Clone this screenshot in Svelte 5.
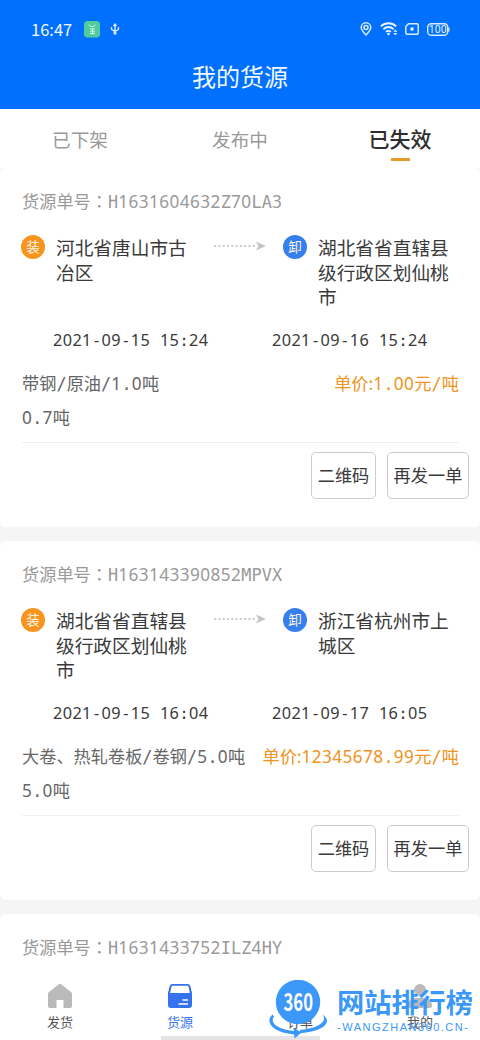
<script>
  const tabs = ['已下架', '发布中', '已失效'];
  let activeTab = '已失效';

  const orders = [
    {
      no: 'H1631604632Z70LA3',
      from: '河北省唐山市古冶区',
      to: '湖北省省直辖县级行政区划仙桃市',
      loadAt: '2021-09-15 15:24',
      unloadAt: '2021-09-16 15:24',
      goods: '带钢/原油/1.0吨',
      price: '1.00元/吨',
      rest: '0.7吨'
    },
    {
      no: 'H163143390852MPVX',
      from: '湖北省省直辖县级行政区划仙桃市',
      to: '浙江省杭州市上城区',
      loadAt: '2021-09-15 16:04',
      unloadAt: '2021-09-17 16:05',
      goods: '大卷、热轧卷板/卷钢/5.0吨',
      price: '12345678.99元/吨',
      rest: '5.0吨'
    },
    { no: 'H1631433752ILZ4HY' }
  ];

  const navItems = [
    { id: 'send', label: '发货' },
    { id: 'goods', label: '货源' },
    { id: 'order', label: '订单' },
    { id: 'mine', label: '我的' }
  ];
  let activeNav = 'goods';

  // digits and other ascii use different faces on the same fixed pitch
  function runs(text) {
    return text.match(/[0-9]+|[\x20-\x2f\x3a-\x7e]+|[^\x20-\x7e]+/g).map((t) => ({
      t,
      kind: /^[0-9]/.test(t) ? 'digits' : /^[\x20-\x7e]/.test(t) ? 'ascii' : 'han'
    }));
  }
</script>

{#snippet mono(text)}{#each runs(text) as r}<span class={r.kind}>{r.t}</span>{/each}{/snippet}

<div class="page">
  <header class="header">
    <div class="status">
      <span class="time">16:47</span>
      <svg class="app-badge" width="16" height="17" viewBox="0 0 16 17">
        <rect width="16" height="16.5" rx="3.5" fill="#4fcb9c" />
        <path d="M4.5 3.800l2 1.700h3l2-1.700M6.300 8h4.500M6.300 10.300h4.500M5.800 12.600h5.200M8.500 8v4.500" fill="none" stroke="#d9fff0" stroke-width="1" />
      </svg>
      <svg class="usb" width="10" height="12" viewBox="0 0 10 12" fill="none" stroke="#d5eaff" stroke-width="1.3">
        <path d="M5 11V1.5M3.5 3L5 1l1.5 2M1.5 4v2.3L5 8.500l3.500-2.200V4" />
        <circle cx="5" cy="10" r="1" fill="#d5eaff" />
      </svg>
      <div class="status-right">
        <svg width="12" height="14" viewBox="0 0 12 14" fill="none" stroke="#d8ecff" stroke-width="1.5">
          <path d="M6 13C3.4 10.2 1.2 8.1 1.2 5.6a4.800 4.800 0 019.600 0C10.800 8.100 8.600 10.200 6 13z" />
          <circle cx="6" cy="5.600" r="2" />
        </svg>
        <svg width="18" height="14" viewBox="0 0 18 14" fill="none" stroke="#e5f3ff" stroke-width="1.8">
          <path d="M.8 4.300c4.600-4.100 10.800-4.100 15.400 0M3.300 7.200c3.300-2.800 7.100-2.800 10.400 0M5.900 9.900c1.600-1.300 3.400-1.300 5 0" />
          <circle cx="8.500" cy="12" r="1.300" fill="#e5f3ff" stroke="none" />
          <path d="M13.300 9.800l2-2.300 2 2.300zM13.300 11l2 2.300 2-2.300z" fill="#e5f3ff" stroke="none" />
        </svg>
        <svg width="14" height="12" viewBox="0 0 14 12">
          <path d="M3.500.8H12a1.200 1.200 0 011.200 1.200v8a1.200 1.200 0 01-1.200 1.200H2A1.200 1.200 0 01.8 10V3.500z" fill="none" stroke="#d8ecff" stroke-width="1.500" />
          <rect x="5.500" y="4.500" width="3" height="3" fill="#fff" />
        </svg>
        <svg width="23" height="13" viewBox="0 0 23 13">
          <rect x=".7" y=".7" width="20" height="11.600" rx="3.500" fill="none" stroke="#d8ecff" stroke-width="1.400" />
          <path d="M21.800 4.500v4" stroke="#d8ecff" stroke-width="1.400" />
          <text x="10.700" y="10.200" text-anchor="middle" font-size="10.500" fill="#e5f3ff">100</text>
        </svg>
      </div>
    </div>
    <h1>我的货源</h1>
  </header>

  <div class="tabs">
    {#each tabs as tab}
      <button class="tab" class:active={tab === activeTab} on:click={() => (activeTab = tab)}>{tab}</button>
    {/each}
  </div>

  <main class="list">
    {#each orders as order}
      <section class="card">
        <div class="order-no">货源单号<span class="colon" lang="zh-TW">：</span>{@render mono(order.no)}</div>
        {#if order.from}
          <div class="route">
            <span class="dot load">装</span>
            <div class="place">{order.from}</div>
            <svg class="arrow" width="52" height="12" viewBox="0 0 52 12">
              <path d="M0 6h42" stroke="#cdcdcd" stroke-width="2" stroke-dasharray="2.200 2.100" />
              <path d="M42 1.500L52 6l-10 4.500L44.500 6z" fill="#c4c4c4" />
            </svg>
            <span class="dot unload">卸</span>
            <div class="place">{order.to}</div>
          </div>
          <div class="dates">
            <span>{@render mono(order.loadAt)}</span>
            <span>{@render mono(order.unloadAt)}</span>
          </div>
          <div class="goods">
            <span>{@render mono(order.goods)}</span>
            <span class="price">单价:{@render mono(order.price)}</span>
          </div>
          <div class="goods rest"><span>{@render mono(order.rest)}</span></div>
          <div class="actions">
            <button class="btn">二维码</button>
            <button class="btn wide">再发一单</button>
          </div>
        {/if}
      </section>
    {/each}
  </main>

  <nav class="nav">
    {#each navItems as item}
      <div class="nav-item" class:active={item.id === activeNav}>
        <svg width="24" height="24" viewBox="0 0 24 24">
          {#if item.id === 'send'}
            <path d="M10.600.5a2.200 2.200 0 012.800 0l9.600 7.600c.7.500 1 1.200 1 2V22a2 2 0 01-2 2h-6.500v-8h-7v8H2a2 2 0 01-2-2V10.100c0-.8.300-1.500 1-2z" fill="#bababa" />
          {:else if item.id === 'goods'}
            <path d="M4.500 0h15a3 3 0 012.900 2.200L24 9v12a3 3 0 01-3 3H3a3 3 0 01-3-3V9l1.600-6.800A3 3 0 014.500 0z" fill="#3472ee" />
            <path d="M5 1.700h14c.8 0 1.400.5 1.600 1.300L21.800 9H2.200l1.200-6c.2-.8.800-1.300 1.600-1.300z" fill="#fff" />
            <path d="M14.500 16h5.500M10.500 20h9.500" stroke="#fff" stroke-width="1.600" />
          {:else if item.id === 'order'}
            <rect x="2" width="20" height="24" rx="2" fill="#bababa" />
            <path d="M7 8h10M7 13h10" stroke="#fff" stroke-width="2" />
          {:else}
            <circle cx="12" cy="6" r="6" fill="#bababa" />
            <path d="M0 22c0-5 3-8 8-8h8c5 0 8 3 8 8a2 2 0 01-2 2H2a2 2 0 01-2-2z" fill="#bababa" />
          {/if}
        </svg>
        <span>{item.label}</span>
      </div>
    {/each}
    <div class="home-bar"></div>
  </nav>

  <div class="mark">
    <svg width="60" height="60" viewBox="0 0 60 60">
      <circle cx="30" cy="22" r="22.200" fill="#3b98f8" />
      <path d="M4.500 34.500C-4 42 5 53 27 54.500v-3.200C11 50 1 43.500 6 36.500zM54.500 34.500c5.500 7-4 13.500-22.500 15.500v3.300c24-1.800 33.500-11.300 22.500-18.800z" fill="#3b98f8" />
      <path d="M25.500 47.500l8 5-7 6z" fill="#3b98f8" />
      <text x="15.500" y="31" font-size="24.500" font-weight="700" fill="#fff" textLength="29.500" lengthAdjust="spacingAndGlyphs">360</text>
    </svg>
    <div class="mark-text">
      <strong>网站排行榜</strong>
      <span>-WANGZHAN360.CN-</span>
    </div>
  </div>
</div>

<style>
  :global(body) {
    margin: 0;
  }

  .page {
    position: relative;
    display: flex;
    flex-direction: column;
    width: 480px;
    height: 1040px;
    overflow: hidden;
    background: #f5f5f5;
    color: #3a3a3a;
    font-family: 'Noto Sans CJK SC', sans-serif;
  }

  button {
    margin: 0;
    padding: 0;
    font-family: inherit;
    cursor: pointer;
  }

  .header {
    flex: none;
    height: 109px;
    background: #0170fe;
    color: #f2faff;
  }

  .status {
    display: flex;
    align-items: center;
    height: 58px;
    padding: 0 30px 0 31px;
  }

  .time {
    width: 53px;
    font-size: 16.500px;
  }

  .usb {
    margin-left: 10px;
  }

  .status-right {
    display: flex;
    align-items: center;
    gap: 8px;
    margin-left: auto;
  }

  .status-right svg:nth-child(2) {
    margin-right: -1px;
  }

  .status-right text {
    font-family: Roboto, sans-serif;
  }

  h1 {
    margin: 0;
    font-size: 24px;
    font-weight: 400;
    line-height: 36px;
    text-align: center;
  }

  .tabs {
    display: flex;
    flex: none;
    height: 59px;
    background: #fff;
  }

  .tab {
    display: flex;
    flex: 1;
    flex-direction: column;
    align-items: center;
    border: none;
    background: none;
    color: #999;
    font-size: 18.600px;
    line-height: 60px;
  }

  .tab.active {
    color: #2e2e2e;
    font-size: 21px;
    font-weight: 500;
    line-height: 59px;
  }

  .tab.active::after {
    width: 19px;
    height: 3px;
    margin-top: -10px;
    background: #e59a2c;
    content: '';
  }

  .list {
    flex: 1;
    min-height: 0;
    overflow: hidden;
  }

  .card {
    height: 359px;
    margin-bottom: 14px;
    padding: 21px 21px 0 22px;
    border-radius: 6px;
    background: #fff;
    box-sizing: border-box;
  }

  .order-no {
    height: 24px;
    color: #999;
    font-size: 17.200px;
    line-height: 24px;
    white-space: nowrap;
  }

  .colon {
    font-family: 'Noto Sans CJK TC', sans-serif;
  }

  .digits {
    font-family: 'Noto Sans', sans-serif;
    letter-spacing: 0.024em;
  }

  .ascii {
    font-family: 'DejaVu Sans Mono', monospace;
    font-size: 0.98em;
    letter-spacing: 0.007em;
    white-space: pre;
  }

  .route {
    display: flex;
    height: 73.500px;
    margin-top: 22px;
  }

  .dot {
    flex: none;
    width: 24px;
    height: 24px;
    margin-left: -1px;
    border-radius: 50%;
    color: #fff3e2;
    font-size: 13.500px;
    line-height: 22px;
    text-align: center;
  }

  .load {
    background: #f7941d;
  }

  .unload {
    margin-left: 17px;
    background: #3580ee;
  }

  .place {
    width: 135px;
    margin-left: 11px;
    font-size: 18.700px;
    line-height: 24.500px;
  }

  .arrow {
    flex: none;
    margin: 5px 0 0 23px;
  }

  .dates {
    display: grid;
    grid-template-columns: 219px 1fr;
    margin-top: 18px;
    padding-left: 31px;
    font-size: 16.300px;
    line-height: 24px;
    height: 24px;
    white-space: nowrap;
  }

  .goods {
    display: flex;
    justify-content: space-between;
    height: 34px;
    margin-top: 15px;
    color: #666;
    font-size: 17.200px;
    line-height: 34px;
    white-space: nowrap;
  }

  .rest {
    height: 43px;
    margin-top: 0;
    border-bottom: 1px solid #f0f0f0;
    box-sizing: border-box;
    margin-bottom: 9px;
  }

  .price {
    color: #ee9420;
  }

  .actions {
    display: flex;
    justify-content: flex-end;
    gap: 11px;
    margin-right: -10px;
  }

  .btn {
    width: 65px;
    height: 47px;
    padding-bottom: 1px;
    border: 1px solid #ccc;
    border-radius: 5px;
    background: #fff;
    color: #3a3a3a;
    font-size: 17.200px;
    white-space: nowrap;
  }

  .btn.wide {
    width: 82px;
  }

  .nav {
    position: relative;
    display: flex;
    flex: none;
    height: 68px;
    background: #fff;
  }

  .nav-item {
    display: flex;
    flex: 1;
    flex-direction: column;
    align-items: center;
    padding-top: 12px;
    color: #555;
    font-size: 13px;
    line-height: 20px;
  }

  .nav-item span {
    margin-top: 4px;
  }

  .nav-item.active {
    color: #3472ee;
  }

  .home-bar {
    position: absolute;
    bottom: 0;
    left: 161px;
    width: 159px;
    height: 4px;
    background: #e4e4e4;
  }

  .mark {
    position: absolute;
    top: 980px;
    left: 268px;
    display: flex;
    color: #3b98f8;
  }

  .mark-text {
    display: flex;
    flex-direction: column;
    margin-left: 9px;
    white-space: nowrap;
  }

  .mark-text strong {
    font-size: 27.200px;
    font-weight: 700;
    line-height: 43px;
  }

  .mark-text span {
    font-family: 'Liberation Sans', sans-serif;
    font-size: 11px;
    letter-spacing: 1.500px;
    line-height: 8px;
  }
</style>
